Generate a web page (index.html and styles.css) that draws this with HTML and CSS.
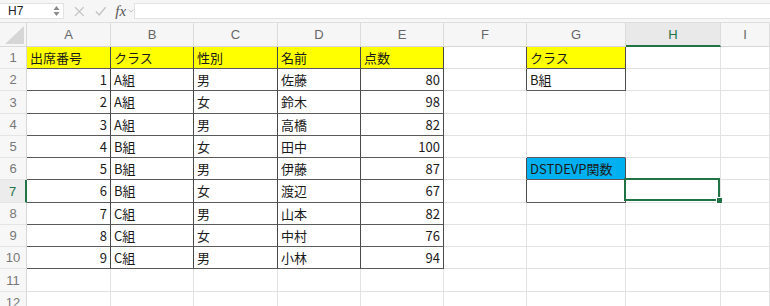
FILE: index.html
```html
<!DOCTYPE html>
<html lang="ja">
<head>
  <meta charset="UTF-8" />
  <title>DSTDEVP</title>
  <link rel="stylesheet" href="styles.css">
</head>
<body>

  <!-- formula bar -->
  <div class="toolbar">
    <div class="namebox">
      <span>H7</span>
      <svg class="stepper" width="7" height="12" viewBox="0 0 7 12">
        <polygon points="3.5,1 6.5,5 0.5,5" fill="#8a8a8a"/>
        <polygon points="0.5,7 6.5,7 3.5,11" fill="#8a8a8a"/>
      </svg>
    </div>
    <div class="fbtns">
      <svg width="11" height="11" viewBox="0 0 11 11">
        <path d="M1 1 L10 10 M10 1 L1 10" stroke="#c2c2c2" stroke-width="1.4" fill="none"/>
      </svg>
      <svg width="12" height="10" viewBox="0 0 12 10">
        <path d="M1 5.5 L4.3 9 L11 1" stroke="#c2c2c2" stroke-width="1.4" fill="none"/>
      </svg>
      <span class="fx">fx</span>
      <svg width="6" height="4" viewBox="0 0 6 4">
        <path d="M0.5 0.5 L3 3.2 L5.5 0.5" stroke="#c2c2c2" stroke-width="1" fill="none"/>
      </svg>
    </div>
    <div class="formula"></div>
  </div>

  <!-- sheet -->
  <div class="sheet">
    <div class="corner">
      <svg width="19" height="18" viewBox="0 0 19 18"><polygon points="19,0 19,18 0,18" fill="#d6d6d6"/></svg>
    </div>
    <div class="ch">A</div><div class="ch">B</div><div class="ch">C</div><div class="ch">D</div>
    <div class="ch">E</div><div class="ch">F</div><div class="ch">G</div><div class="ch sel">H</div><div class="ch">I</div>

    <div class="rh">1</div>
    <div class="c y bd">出席番号</div><div class="c y bd">クラス</div><div class="c y bd">性別</div>
    <div class="c y bd">名前</div><div class="c y bd">点数</div><div class="c br"></div>
    <div class="c y bd">クラス</div><div class="c"></div><div class="c"></div>

    <div class="rh">2</div>
    <div class="c n bd">1</div><div class="c bd">A組</div><div class="c bd">男</div>
    <div class="c bd">佐藤</div><div class="c n bd">80</div><div class="c br"></div>
    <div class="c bd">B組</div><div class="c"></div><div class="c"></div>

    <div class="rh">3</div>
    <div class="c n bd">2</div><div class="c bd">A組</div><div class="c bd">女</div>
    <div class="c bd">鈴木</div><div class="c n bd">98</div><div class="c"></div>
    <div class="c"></div><div class="c"></div><div class="c"></div>

    <div class="rh">4</div>
    <div class="c n bd">3</div><div class="c bd">A組</div><div class="c bd">男</div>
    <div class="c bd">高橋</div><div class="c n bd">82</div><div class="c"></div>
    <div class="c"></div><div class="c"></div><div class="c"></div>

    <div class="rh">5</div>
    <div class="c n bd">4</div><div class="c bd">B組</div><div class="c bd">女</div>
    <div class="c bd">田中</div><div class="c n bd">100</div><div class="c"></div>
    <div class="c bb"></div><div class="c"></div><div class="c"></div>

    <div class="rh">6</div>
    <div class="c n bd">5</div><div class="c bd">B組</div><div class="c bd">男</div>
    <div class="c bd">伊藤</div><div class="c n bd">87</div><div class="c br"></div>
    <div class="c blue bd">DSTDEVP関数</div><div class="c"></div><div class="c"></div>

    <div class="rh sel">7</div>
    <div class="c n bd">6</div><div class="c bd">B組</div><div class="c bd">女</div>
    <div class="c bd">渡辺</div><div class="c n bd">67</div><div class="c br"></div>
    <div class="c bd"></div><div class="c active"></div><div class="c"></div>

    <div class="rh">8</div>
    <div class="c n bd">7</div><div class="c bd">C組</div><div class="c bd">男</div>
    <div class="c bd">山本</div><div class="c n bd">82</div><div class="c"></div>
    <div class="c"></div><div class="c"></div><div class="c"></div>

    <div class="rh">9</div>
    <div class="c n bd">8</div><div class="c bd">C組</div><div class="c bd">女</div>
    <div class="c bd">中村</div><div class="c n bd">76</div><div class="c"></div>
    <div class="c"></div><div class="c"></div><div class="c"></div>

    <div class="rh">10</div>
    <div class="c n bd">9</div><div class="c bd">C組</div><div class="c bd">男</div>
    <div class="c bd">小林</div><div class="c n bd">94</div><div class="c"></div>
    <div class="c"></div><div class="c"></div><div class="c"></div>

    <div class="rh">11</div>
    <div class="c"></div><div class="c"></div><div class="c"></div><div class="c"></div><div class="c"></div>
    <div class="c"></div><div class="c"></div><div class="c"></div><div class="c"></div>

    <div class="rh">12</div>
    <div class="c"></div><div class="c"></div><div class="c"></div><div class="c"></div><div class="c"></div>
    <div class="c"></div><div class="c"></div><div class="c"></div><div class="c"></div>
  </div>

</body>
</html>
```

FILE: styles.css
```css
* { box-sizing: border-box; }

html, body {
  margin: 0;
  padding: 0;
  background: #fff;
  overflow: hidden;
  font-family: "Liberation Sans", Arial, sans-serif;
}

/* formula bar */
.toolbar {
  height: 23px;
  display: flex;
  align-items: flex-start;
  padding-top: 3px;
  background: #f6f6f6;
  border-bottom: 1px solid #dedede;
}

.namebox {
  width: 64px;
  height: 16px;
  background: #fff;
  border: 1px solid #e2e2e2;
  border-left: none;
  display: flex;
  align-items: center;
  justify-content: space-between;
  padding: 0 3px 0 8px;
  font-size: 12px;
  color: #222;
}

.fbtns {
  width: 70px;
  height: 16px;
  display: flex;
  align-items: center;
  gap: 0;
  padding-left: 10px;
}

.fbtns svg:nth-child(2) { margin-left: 10px; }

.fx {
  margin-left: 9px;
  font-family: "Liberation Serif", serif;
  font-style: italic;
  font-size: 15px;
  color: #555;
  line-height: 16px;
}

.fbtns svg:last-child { margin-left: 2px; }

.formula {
  flex: 1;
  height: 16px;
  background: #fff;
  border: 1px solid #e2e2e2;
  border-right: none;
}

/* grid */
.sheet {
  display: grid;
  grid-template-columns: 27px 84px 83px 84px 83px 83px 83px 99px 95px 1fr;
  grid-template-rows: 24px 22px 22px 23px 22px 22px 22px 23px 22px 22px 22px 23px 22px;
}

.corner {
  background: #f6f6f6;
  border-right: 1px solid #d8d8d8;
  border-bottom: 1px solid #d8d8d8;
  display: flex;
  align-items: flex-end;
  justify-content: flex-end;
  padding: 0 2px 2px 0;
}

.ch {
  background: #f6f6f6;
  border-right: 1px solid #dcdcdc;
  border-bottom: 1px solid #d8d8d8;
  display: flex;
  align-items: center;
  justify-content: center;
  font-size: 13px;
  color: #666;
}

.ch.sel {
  background: #e9e9e9;
  color: #217346;
  border-bottom: 2px solid #217346;
}

.rh {
  background: #f7f7f7;
  border-right: 1px solid #d8d8d8;
  border-bottom: 1px solid #e4e4e4;
  display: flex;
  align-items: center;
  justify-content: center;
  font-size: 13px;
  color: #777;
}

.rh.sel {
  background: #ececec;
  color: #217346;
  border-right: 2px solid #217346;
}

.c {
  border-right: 1px solid #e2e2e2;
  border-bottom: 1px solid #e2e2e2;
  display: flex;
  align-items: center;
  padding: 0 3px 1px 3px;
  font-family: "Noto Sans CJK JP", "Liberation Sans", sans-serif;
  font-size: 13px;
  color: #1a1a1a;
  white-space: nowrap;
}

.n { justify-content: flex-end; }

.y { background: #ffff00; }
.blue { background: #00b0f0; }

.bd { border-right-color: #4a4a4a; border-bottom-color: #5a5a5a; }
.br { border-right-color: #4a4a4a; }
.bb { border-bottom-color: #5a5a5a; }

/* selected cell H7 */
.active { position: relative; }

.active::before {
  content: "";
  position: absolute;
  top: -2px;
  left: -2px;
  right: 0;
  bottom: 1px;
  border: 2px solid #217346;
}

.active::after {
  content: "";
  position: absolute;
  right: -3px;
  bottom: -2px;
  width: 5px;
  height: 5px;
  background: #217346;
  border: 1px solid #fff;
}
```
